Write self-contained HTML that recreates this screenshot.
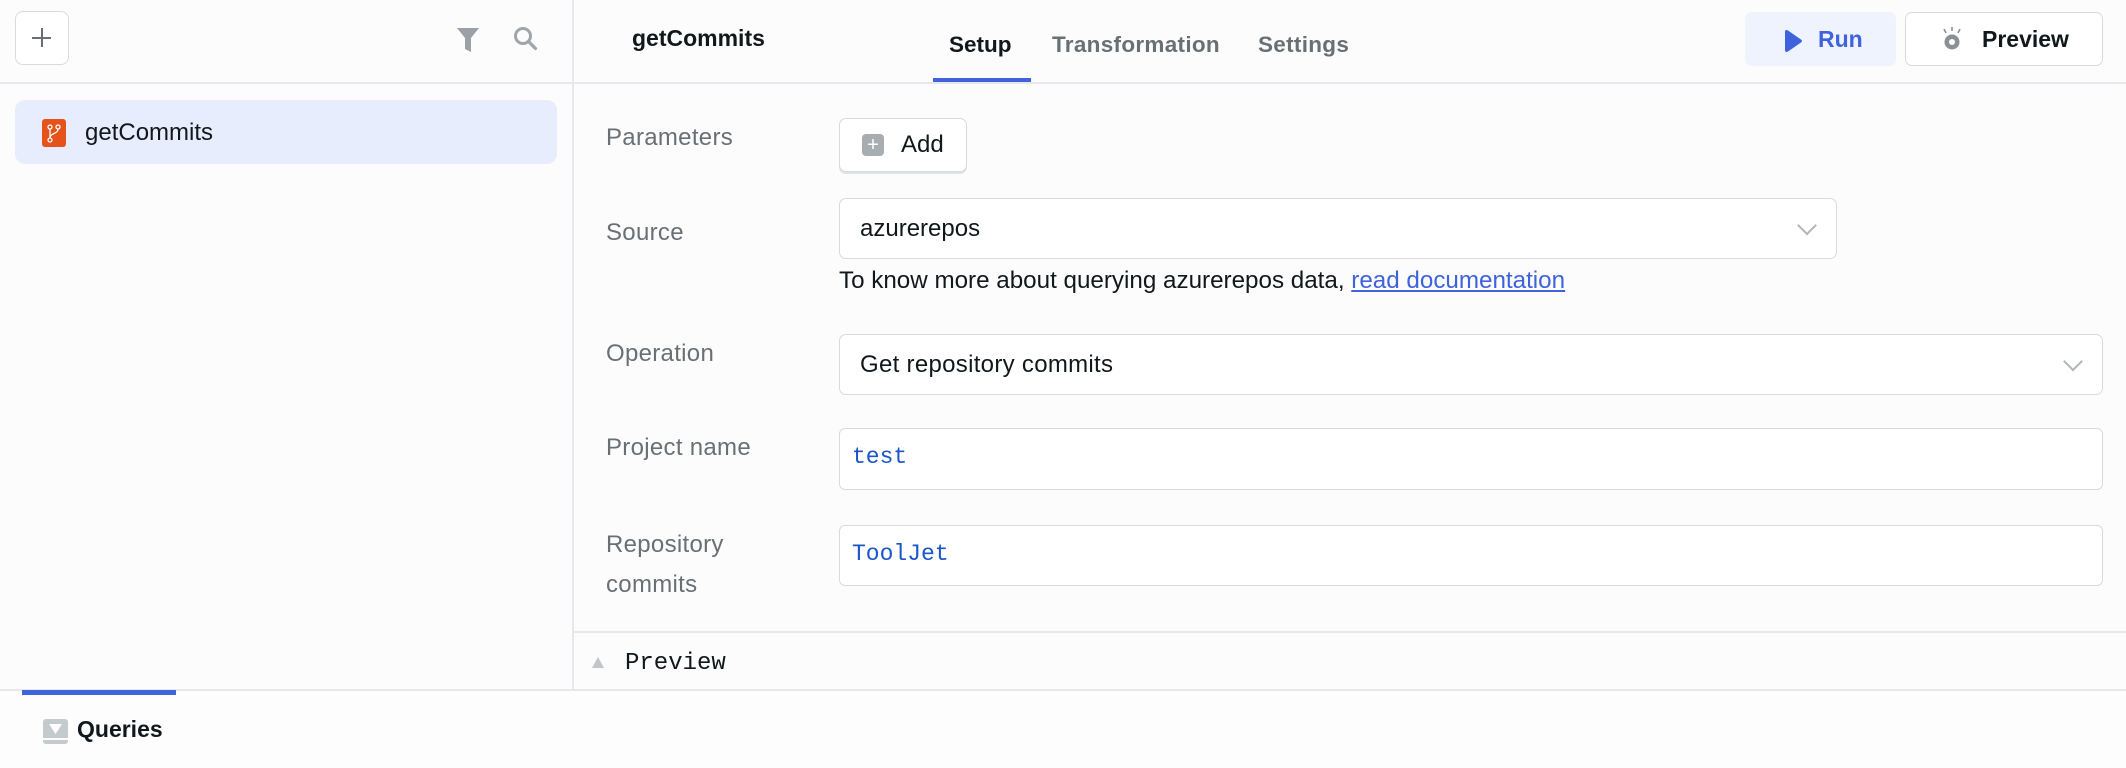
<!DOCTYPE html>
<html><head><meta charset="utf-8"><style>
*{box-sizing:border-box;margin:0;padding:0}
body{width:2126px;height:768px;background:#fcfcfc;font-family:"Liberation Sans",sans-serif;position:relative;overflow:hidden;color:#11181c}
.a{position:absolute}
.lbl{position:absolute;left:606px;font-size:24px;letter-spacing:0.3px;color:#687076;line-height:28px}
.box{position:absolute;border:1.5px solid #d7dbdf;border-radius:7px;background:#fff}
.mono{font-family:"Liberation Mono",monospace;font-size:23px;color:#1a56c8}
.chev{position:absolute;right:22px;top:50%;width:14px;height:14px;border-right:2.5px solid #b0b5ba;border-bottom:2.5px solid #b0b5ba;transform:translateY(-75%) rotate(45deg)}
</style></head><body>
<div class="a" style="left:572px;top:0;width:2px;height:690px;background:#e6e8eb"></div>
<div class="a" style="left:0;top:82px;width:2126px;height:2px;background:#e6e8eb"></div>
<div class="a" style="left:574px;top:631px;width:1552px;height:2px;background:#e6e8eb"></div>
<div class="a" style="left:0;top:689px;width:2126px;height:2px;background:#e6e8eb"></div>
<div class="a" style="left:0;top:691px;width:2126px;height:77px;background:#fdfdfd"></div>
<div class="box" style="left:15px;top:11px;width:54px;height:54px;border-radius:8px"></div>
<div class="a" style="left:32px;top:37px;width:19px;height:2px;background:#687076"></div>
<div class="a" style="left:41px;top:28px;width:2px;height:19px;background:#687076"></div>
<svg class="a" style="left:456px;top:27px" width="24" height="26" viewBox="0 0 24 26"><path d="M1 1h22l-8 10v14l-6-3V11z" fill="#9ba1a6"/></svg>
<svg class="a" style="left:513px;top:26px" width="26" height="26" viewBox="0 0 26 26"><circle cx="10" cy="10" r="7.5" fill="none" stroke="#a0a5aa" stroke-width="3"/><path d="M15.5 15.5l7 7" stroke="#a0a5aa" stroke-width="3.2" stroke-linecap="round"/></svg>
<div class="a" style="left:15px;top:100px;width:542px;height:64px;background:#e8edfd;border-radius:10px"></div>
<div class="a" style="left:42px;top:119px;width:24px;height:28px;background:#e5531a;border-radius:3px"></div>
<svg class="a" style="left:42px;top:119px" width="24" height="28" viewBox="0 0 24 28"><g fill="none" stroke="#fff" stroke-width="1.3"><circle cx="8" cy="8" r="2"/><circle cx="16" cy="8" r="2"/><circle cx="8" cy="21" r="2"/><path d="M8 10v9M16 10c0 5-8 4-8 9"/></g></svg>
<div class="a" style="left:85px;top:119px;font-size:24px;color:#11181c">getCommits</div>
<div class="a" style="left:632px;top:25px;font-size:23px;font-weight:bold;color:#11181c">getCommits</div>
<div class="a" style="left:949px;top:32px;font-size:22.5px;font-weight:bold;color:#11181c">Setup</div>
<div class="a" style="left:933px;top:78px;width:98px;height:4px;background:#3e63dd"></div>
<div class="a" style="left:1052px;top:32px;font-size:22.5px;font-weight:bold;color:#687076;letter-spacing:0.3px">Transformation</div>
<div class="a" style="left:1258px;top:32px;font-size:22.5px;font-weight:bold;color:#687076;letter-spacing:0.3px">Settings</div>
<div class="a" style="left:1745px;top:12px;width:151px;height:54px;background:#eff3fe;border-radius:7px"></div>
<svg class="a" style="left:1783px;top:29px" width="20" height="24" viewBox="0 0 20 24"><path d="M2 3q0-3 3-1.5l13 9q2 1.5 0 3l-13 9q-3 1.5-3-1.5z" fill="#3e63dd"/></svg>
<div class="a" style="left:1818px;top:26px;font-size:23px;font-weight:bold;color:#3e63dd">Run</div>
<div class="box" style="left:1905px;top:12px;width:198px;height:54px"></div>
<svg class="a" style="left:1940px;top:26px" width="24" height="26" viewBox="0 0 24 26"><circle cx="12" cy="16" r="7.5" fill="#8a9095"/><circle cx="12" cy="16" r="3" fill="#fff"/><path d="M12 1v4M4 3l2 4M20 3l-2 4" stroke="#8a9095" stroke-width="1.6"/></svg>
<div class="a" style="left:1982px;top:26px;font-size:23px;font-weight:bold;color:#11181c">Preview</div>
<div class="lbl" style="top:124px">Parameters</div>
<div class="box" style="left:839px;top:118px;width:128px;height:54px;box-shadow:0 2px 0 #e0e3e6"></div>
<div class="a" style="left:862px;top:134px;width:22px;height:22px;background:#a8adb2;border-radius:4px;color:#fff;font-size:20px;line-height:22px;text-align:center">+</div>
<div class="a" style="left:901px;top:131px;font-size:24px">Add</div>
<div class="lbl" style="top:219px">Source</div>
<div class="box" style="left:839px;top:198px;width:998px;height:61px"><div class="a" style="left:20px;top:16px;font-size:24px">azurerepos</div><div class="chev"></div></div>
<div class="a" style="left:839px;top:267px;font-size:24.2px;color:#11181c">To know more about querying azurerepos data, <span style="color:#3e63dd;text-decoration:underline">read documentation</span></div>
<div class="lbl" style="top:340px">Operation</div>
<div class="box" style="left:839px;top:334px;width:1264px;height:61px"><div class="a" style="left:20px;top:16px;font-size:24px;letter-spacing:0.3px">Get repository commits</div><div class="chev"></div></div>
<div class="lbl" style="top:434px">Project name</div>
<div class="box" style="left:839px;top:428px;width:1264px;height:62px;border-radius:6px"><div class="a mono" style="left:12px;top:15px">test</div></div>
<div class="lbl" style="top:531px">Repository</div>
<div class="lbl" style="top:571px">commits</div>
<div class="box" style="left:839px;top:525px;width:1264px;height:61px;border-radius:6px"><div class="a mono" style="left:12px;top:15px">ToolJet</div></div>
<svg class="a" style="left:592px;top:657px" width="12" height="11"><path d="M6 0l6 11H0z" fill="#c1c6cb"/></svg>
<div class="a" style="left:625px;top:650px;font-family:'Liberation Mono',monospace;font-size:24px;color:#11181c">Preview</div>
<div class="a" style="left:22px;top:690px;width:154px;height:5px;background:#3e63dd"></div>
<div class="a" style="left:43px;top:719px;width:25px;height:25px;background:#c5cacd;border-radius:3px"></div>
<div class="a" style="left:43px;top:738px;width:25px;height:2px;background:#fdfdfd"></div>
<svg class="a" style="left:49px;top:724px" width="13" height="10"><path d="M0 0h13L6.5 10z" fill="#fff"/></svg>
<div class="a" style="left:77px;top:716px;font-size:23px;font-weight:bold;color:#11181c">Queries</div>
</body></html>
